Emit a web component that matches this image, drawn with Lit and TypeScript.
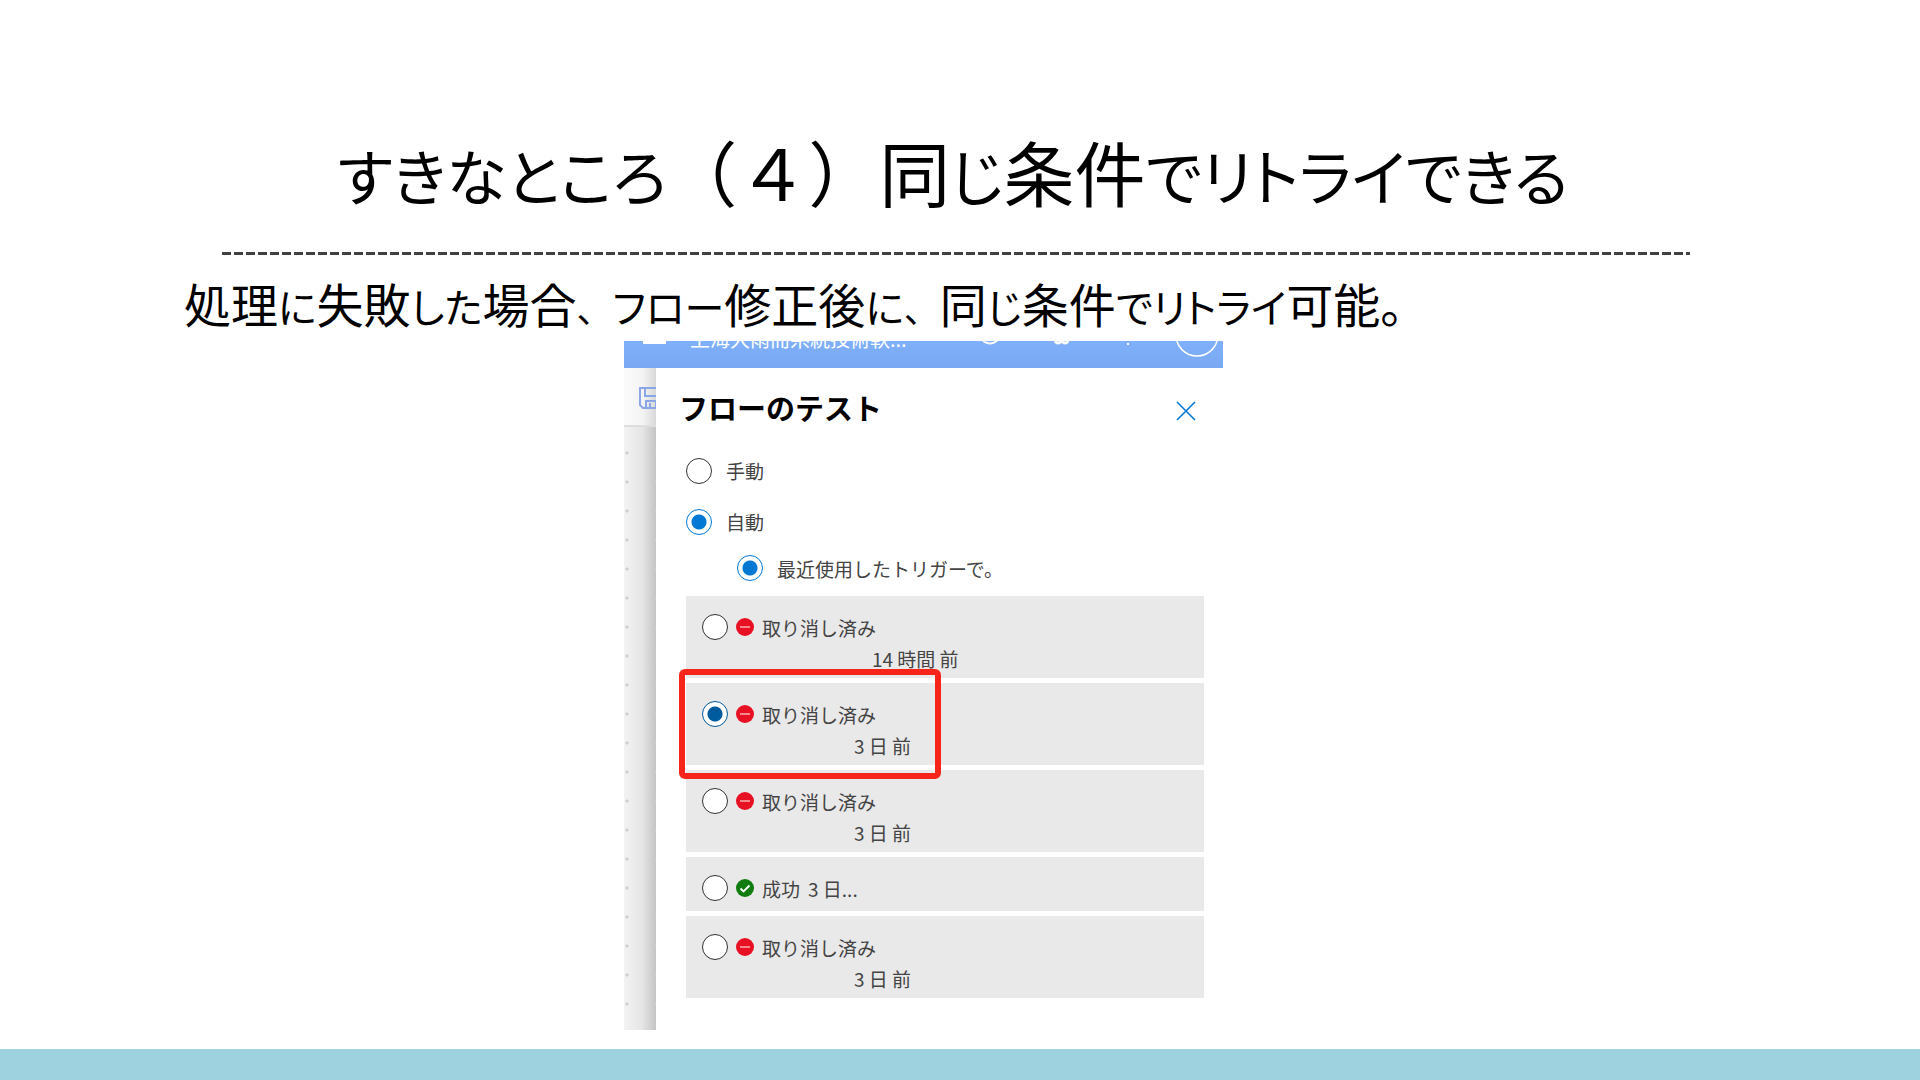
import { LitElement, html, css, svg } from "lit";
import { customElement, state } from "lit/decorators.js";

interface Run {
  status: "cancelled" | "success";
  label: string;
  when: string;
  inset: "near" | "far" | "inline";
}

const RUNS: Run[] = [
  { status: "cancelled", label: "取り消し済み", when: "14 時間 前", inset: "far" },
  { status: "cancelled", label: "取り消し済み", when: "3 日 前", inset: "near" },
  { status: "cancelled", label: "取り消し済み", when: "3 日 前", inset: "near" },
  { status: "success", label: "成功", when: "3 日...", inset: "inline" },
  { status: "cancelled", label: "取り消し済み", when: "3 日 前", inset: "near" },
];

const TITLE = "すきなところ（４）同じ条件でリトライできる";
const LEAD = "処理に失敗した場合、フロー修正後に、同じ条件でリトライ可能。";

/** Wraps kana and commas in spans, so that they can be set smaller than the kanji. */
const withKana = (text: string) =>
  text
    .split(/([\u3041-\u30ff]+|、)/)
    .filter(Boolean)
    .map((part) => {
      if (part === "、") return html`<span class="comma">${part}</span>`;
      return /^[\u3041-\u30ff]/.test(part) ? html`<span class="kana">${part}</span>` : part;
    });

const cancelledIcon = svg`<circle cx="9" cy="9" r="9" fill="#e81123"/><path d="M4 9h10" stroke="#fbb" stroke-width="1.4"/>`;
const successIcon = svg`<circle cx="9" cy="9" r="9" fill="#107c10"/><path d="M4.5 9.5l3 3 6-6" fill="none" stroke="#fff" stroke-width="1.8"/>`;

@customElement("app-root")
export class AppRoot extends LitElement {
  @state() private selected = 1;

  static styles = css`
    :host {
      display: block;
      font-family: "Noto Sans CJK JP", sans-serif;
      color: #000;
    }
    * { box-sizing: border-box; }
    .slide {
      min-height: 100vh;
      display: flex;
      flex-direction: column;
      background: #fff;
    }
    .title {
      margin: 0;
      padding-top: 118px;
      padding-right: 14px;
      text-align: center;
      font-size: 71px;
      line-height: 104px;
      height: 224px;
      font-weight: 400;
      white-space: nowrap;
    }
    .kana { font-feature-settings: "palt"; }
    .title .kana { font-size: 61px; }
    .lead .kana { font-size: 40px; }
    .lead .comma { font-size: 36px; }
    .rule {
      height: 3px;
      margin: 28px 230px 0 222px;
      background: repeating-linear-gradient(90deg, #404040 0 9px, transparent 9px 12px);
    }
    .lead {
      margin: 0;
      padding: 18px 0 0 184px;
      height: 81px;
      font-size: 47px;
      line-height: 60px;
      white-space: nowrap;
    }
    .capture {
      width: 599px;
      margin: 5px 0 19px 624px;
      flex: 1;
      display: flex;
      flex-direction: column;
    }
    .appbar {
      height: 27px;
      overflow: hidden;
      color: #fff;
      background: linear-gradient(#80b0fb, #7aa8f2);
      display: grid;
      grid-template-columns: 66px 1fr auto;
    }
    .appname {
      font-size: 20px;
      line-height: 30px;
      margin-top: -17px;
    }
    .appbar svg { display: block; }
    .body { flex: 1; display: flex; }
    .canvas {
      width: 32px;
      overflow: hidden;
      display: flex;
      flex-direction: column;
      background: linear-gradient(90deg, #f3f3f3, #e6e6e6 55%, #c4c4c4);
    }
    .tools {
      height: 59px;
      padding: 18px 0 0 15px;
      border-bottom: 2px solid #dedede;
      background: linear-gradient(90deg, #fbfbfb, #f3f3f3 60%, #d8d8d8);
    }
    .tools svg { display: block; }
    .dots {
      flex: 1;
      margin-top: 12px;
      background: radial-gradient(circle at 3px 14px, #ccc 1px, transparent 2px) 0 0 / 29px 29px;
    }
    .panel {
      flex: 1;
      padding: 19px 19px 0 30px;
      background: #fff;
    }
    .head {
      display: flex;
      justify-content: space-between;
    }
    .head h2 {
      margin: 0 0 0 -7px;
      font-size: 29px;
      line-height: 40px;
      font-weight: 700;
    }
    .close {
      border: 0;
      padding: 14px 0 0;
      background: none;
      height: 34px;
    }
    .close svg { display: block; }
    .options { padding-top: 18px; }
    .option {
      display: flex;
      align-items: center;
      gap: 14px;
      height: 51px;
      font-size: 19px;
      color: #444;
    }
    .option.nested { height: 42px; margin-left: 51px; }
    input {
      appearance: none;
      flex: none;
      width: 26px;
      height: 26px;
      margin: 0;
      border: 1px solid #333;
      border-radius: 50%;
      background: #fff;
    }
    input:checked {
      border-color: #0078d4;
      background: radial-gradient(circle, #0078d4 7px, #fff 8px);
    }
    .run input:checked {
      border-color: #005a9e;
      background: radial-gradient(circle, #005a9e 7px, #fff 8px);
    }
    .runs {
      list-style: none;
      margin: 7px 0 0;
      padding: 0;
      display: grid;
      gap: 5px;
    }
    .item { position: relative; }
    .run {
      display: grid;
      grid-template-columns: 26px 18px 1fr;
      column-gap: 8px;
      align-items: center;
      padding: 15px 16px 5px;
      background: #e9e9e9;
      color: #444;
      font-size: 19px;
      line-height: 29px;
    }
    .run span { padding-top: 2px; }
    .run svg { display: block; }
    .run .when { grid-column: 1 / -1; }
    .near { padding-left: 152px; }
    .far { padding-left: 170px; }
    .run.inline { padding-bottom: 8px; }
    .run .soon { padding-left: 8px; }
    .marker {
      position: absolute;
      left: -7px;
      top: -14px;
      width: 262px;
      height: 110px;
      border: 6px solid #f7241a;
      border-radius: 6px;
      pointer-events: none;
      z-index: 1;
    }
    .band { height: 31px; background: #9fd2df; }
  `;

  private renderRun(run: Run, i: number) {
    const inline = run.inset === "inline";
    return html`<li class="item">
      <label class="run ${inline ? "inline" : ""}">
        <input type="radio" name="run" .checked=${this.selected === i} @change=${() => (this.selected = i)} />
        <svg width="18" height="18" viewBox="0 0 18 18" aria-hidden="true">
          ${run.status === "success" ? successIcon : cancelledIcon}
        </svg>
        <span>${run.label}${inline ? html`<span class="soon">${run.when}</span>` : ""}</span>
        ${inline ? "" : html`<span class="when ${run.inset}">${run.when}</span>`}
      </label>
      ${i === 1 ? html`<div class="marker"></div>` : ""}
    </li>`;
  }

  render() {
    return html`<main class="slide">
      <h1 class="title">${withKana(TITLE)}</h1>
      <div class="rule"></div>
      <p class="lead">${withKana(LEAD)}</p>
      <section class="capture">
        <header class="appbar">
          <svg width="66" height="27" viewBox="0 0 66 27"><path d="M19 1.5h23" stroke="#fff" stroke-width="3"/></svg>
          <span class="appname">上海大雨而系統技術軟...</span>
          <svg width="260" height="27" viewBox="0 0 260 27" fill="none" stroke="#fff">
            <path d="M20 0q7 5 14 0" stroke-width="2"/>
            <path d="M92 0q3 4 6 0M99 0q3 4 6 0" stroke-width="3"/>
            <path d="M165 2v2" stroke-width="2"/>
            <circle cx="234" cy="-6" r="21" stroke-width="1.5"/>
          </svg>
        </header>
        <div class="body">
          <div class="canvas">
            <div class="tools">
              <svg width="24" height="24" viewBox="0 0 24 24" fill="none" stroke="#8ba6e6" stroke-width="2">
                <path d="M1 2h21v20H4l-3-3zM6 2v8h13V2M7 22v-7h10v7M11 17v5"/>
              </svg>
            </div>
            <div class="dots"></div>
          </div>
          <div class="panel">
            <div class="head">
              <h2>フローのテスト</h2>
              <button class="close" aria-label="閉じる">
                <svg width="30" height="20" viewBox="0 0 30 20" stroke="#0078d4" stroke-width="1.6"><path d="M3 1l18 18M21 1L3 19"/></svg>
              </button>
            </div>
            <div class="options">
              <label class="option"><input type="radio" name="mode" />手動</label>
              <label class="option"><input type="radio" name="mode" checked />自動</label>
              <label class="option nested"><input type="radio" name="source" checked />最近使用したトリガーで。</label>
            </div>
            <ul class="runs">${RUNS.map((r, i) => this.renderRun(r, i))}</ul>
          </div>
        </div>
      </section>
      <footer class="band"></footer>
    </main>`;
  }
}
